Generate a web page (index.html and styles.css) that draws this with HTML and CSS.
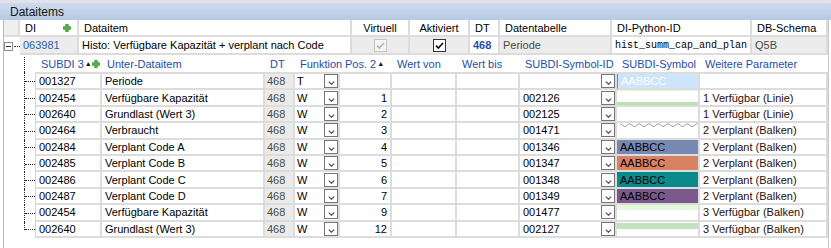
FILE: index.html
```html
<!DOCTYPE html>
<html>
  <head>
    <title>Dataitems</title>
    <link rel="stylesheet" href="styles.css">
  </head>
  <body>
    <div class="panel">
      <div class="caption">Dataitems</div>
      <div class="grid">
        <div class="main-row main-head">
          <div class="cell gutter"></div>
          <div class="cell">DI
            <svg class="plus" width="8" height="8" viewBox="0 0 8 8"><path d="M2.7 0.4h2.6v2.3h2.3v2.6h-2.3v2.3h-2.6v-2.3h-2.3v-2.6h2.3z" fill="#55b545" stroke="#2f8a2a" stroke-width="0.7"/></svg>
          </div>
          <div class="cell">Dataitem</div>
          <div class="cell center">Virtuell</div>
          <div class="cell center">Aktiviert</div>
          <div class="cell">DT</div>
          <div class="cell">Datentabelle</div>
          <div class="cell">DI-Python-ID</div>
          <div class="cell">DB-Schema</div>
        </div>
        <div class="main-row main-item">
          <div class="cell gutter">
            <span class="toggle"><span class="minus"></span></span>
            <span class="dots"></span>
          </div>
          <div class="cell grey link">063981</div>
          <div class="cell">Histo: Verfügbare Kapazität + verplant nach Code</div>
          <div class="cell grey center">
            <span class="check disabled"><svg width="11" height="11" viewBox="0 0 11 11"><path d="M2 5.6l2.4 2.4 4.6-5" fill="none" stroke="#b4b4b4" stroke-width="1.6"/></svg></span>
          </div>
          <div class="cell grey center">
            <span class="check"><svg width="11" height="11" viewBox="0 0 11 11"><path d="M2 5.6l2.4 2.4 4.6-5" fill="none" stroke="#111" stroke-width="1.7"/></svg></span>
          </div>
          <div class="cell dt-link">468</div>
          <div class="cell grey muted">Periode</div>
          <div class="cell mono">hist_summ_cap_and_plan</div>
          <div class="cell grey muted">Q5B</div>
        </div>

        <div class="sub-row sub-head">
          <div class="tree"><span class="stem"></span></div>
          <div class="sub-cells">
            <div class="cell">SUBDI 3<span class="sort">&#9650;</span>
              <svg class="plus sub-plus" width="8" height="8" viewBox="0 0 8 8"><path d="M2.7 0.4h2.6v2.3h2.3v2.6h-2.3v2.3h-2.6v-2.3h-2.3v-2.6h2.3z" fill="#55b545" stroke="#2f8a2a" stroke-width="0.7"/></svg>
            </div>
            <div class="cell">Unter-Dataitem</div>
            <div class="cell">DT</div>
            <div class="cell">Funktion</div>
            <div class="cell">Pos. 2<span class="sort">&#9650;</span></div>
            <div class="cell">Wert von</div>
            <div class="cell">Wert bis</div>
            <div class="cell">SUBDI-Symbol-ID</div>
            <div class="cell">SUBDI-Symbol</div>
            <div class="cell">Weitere Parameter</div>
          </div>
        </div>

        <div class="sub-body">
          <div class="sub-row first">
            <div class="tree"><span class="branch"></span></div>
            <div class="sub-cells">
              <div class="cell">001327</div>
              <div class="cell">Periode</div>
              <div class="cell dt">468</div>
              <div class="cell fn">T<span class="drop"><svg width="7" height="4" viewBox="0 0 7 4"><path d="M0.8 0.6l2.7 2.6 2.7-2.6" fill="none" stroke="#555" stroke-width="1.3"/></svg></span></div>
              <div class="cell num"></div>
              <div class="cell"></div>
              <div class="cell"></div>
              <div class="cell sym-id"><span class="drop"><svg width="7" height="4" viewBox="0 0 7 4"><path d="M0.8 0.6l2.7 2.6 2.7-2.6" fill="none" stroke="#555" stroke-width="1.3"/></svg></span></div>
              <div class="cell sym sym-selected">AABBCC</div>
              <div class="cell param"></div>
            </div>
          </div>
          <div class="sub-row">
            <div class="tree"><span class="branch"></span></div>
            <div class="sub-cells">
              <div class="cell">002454</div>
              <div class="cell">Verfügbare Kapazität</div>
              <div class="cell dt">468</div>
              <div class="cell fn">W<span class="drop"><svg width="7" height="4" viewBox="0 0 7 4"><path d="M0.8 0.6l2.7 2.6 2.7-2.6" fill="none" stroke="#555" stroke-width="1.3"/></svg></span></div>
              <div class="cell num">1</div>
              <div class="cell"></div>
              <div class="cell"></div>
              <div class="cell sym-id">002126<span class="drop"><svg width="7" height="4" viewBox="0 0 7 4"><path d="M0.8 0.6l2.7 2.6 2.7-2.6" fill="none" stroke="#555" stroke-width="1.3"/></svg></span></div>
              <div class="cell sym sym-line"></div>
              <div class="cell param">1 Verfügbar (Linie)</div>
            </div>
          </div>
          <div class="sub-row">
            <div class="tree"><span class="branch"></span></div>
            <div class="sub-cells">
              <div class="cell">002640</div>
              <div class="cell">Grundlast (Wert 3)</div>
              <div class="cell dt">468</div>
              <div class="cell fn">W<span class="drop"><svg width="7" height="4" viewBox="0 0 7 4"><path d="M0.8 0.6l2.7 2.6 2.7-2.6" fill="none" stroke="#555" stroke-width="1.3"/></svg></span></div>
              <div class="cell num">2</div>
              <div class="cell"></div>
              <div class="cell"></div>
              <div class="cell sym-id">002125<span class="drop"><svg width="7" height="4" viewBox="0 0 7 4"><path d="M0.8 0.6l2.7 2.6 2.7-2.6" fill="none" stroke="#555" stroke-width="1.3"/></svg></span></div>
              <div class="cell sym"></div>
              <div class="cell param">1 Verfügbar (Linie)</div>
            </div>
          </div>
          <div class="sub-row">
            <div class="tree"><span class="branch"></span></div>
            <div class="sub-cells">
              <div class="cell">002464</div>
              <div class="cell">Verbraucht</div>
              <div class="cell dt">468</div>
              <div class="cell fn">W<span class="drop"><svg width="7" height="4" viewBox="0 0 7 4"><path d="M0.8 0.6l2.7 2.6 2.7-2.6" fill="none" stroke="#555" stroke-width="1.3"/></svg></span></div>
              <div class="cell num">3</div>
              <div class="cell"></div>
              <div class="cell"></div>
              <div class="cell sym-id">001471<span class="drop"><svg width="7" height="4" viewBox="0 0 7 4"><path d="M0.8 0.6l2.7 2.6 2.7-2.6" fill="none" stroke="#555" stroke-width="1.3"/></svg></span></div>
              <div class="cell sym sym-zigzag">
                <svg width="81" height="5" viewBox="0 0 81 5"><defs><pattern id="zz" width="10" height="5" patternUnits="userSpaceOnUse"><path d="M0 0.5L5 3.8L10 0.5" fill="none" stroke="#9a9a9a" stroke-width="1"/></pattern></defs><rect width="81" height="5" fill="url(#zz)"/></svg>
              </div>
              <div class="cell param">2 Verplant (Balken)</div>
            </div>
          </div>
          <div class="sub-row">
            <div class="tree"><span class="branch"></span></div>
            <div class="sub-cells">
              <div class="cell">002484</div>
              <div class="cell">Verplant Code A</div>
              <div class="cell dt">468</div>
              <div class="cell fn">W<span class="drop"><svg width="7" height="4" viewBox="0 0 7 4"><path d="M0.8 0.6l2.7 2.6 2.7-2.6" fill="none" stroke="#555" stroke-width="1.3"/></svg></span></div>
              <div class="cell num">4</div>
              <div class="cell"></div>
              <div class="cell"></div>
              <div class="cell sym-id">001346<span class="drop"><svg width="7" height="4" viewBox="0 0 7 4"><path d="M0.8 0.6l2.7 2.6 2.7-2.6" fill="none" stroke="#555" stroke-width="1.3"/></svg></span></div>
              <div class="cell sym sym-slate">AABBCC</div>
              <div class="cell param">2 Verplant (Balken)</div>
            </div>
          </div>
          <div class="sub-row">
            <div class="tree"><span class="branch"></span></div>
            <div class="sub-cells">
              <div class="cell">002485</div>
              <div class="cell">Verplant Code B</div>
              <div class="cell dt">468</div>
              <div class="cell fn">W<span class="drop"><svg width="7" height="4" viewBox="0 0 7 4"><path d="M0.8 0.6l2.7 2.6 2.7-2.6" fill="none" stroke="#555" stroke-width="1.3"/></svg></span></div>
              <div class="cell num">5</div>
              <div class="cell"></div>
              <div class="cell"></div>
              <div class="cell sym-id">001347<span class="drop"><svg width="7" height="4" viewBox="0 0 7 4"><path d="M0.8 0.6l2.7 2.6 2.7-2.6" fill="none" stroke="#555" stroke-width="1.3"/></svg></span></div>
              <div class="cell sym sym-salmon">AABBCC</div>
              <div class="cell param">2 Verplant (Balken)</div>
            </div>
          </div>
          <div class="sub-row">
            <div class="tree"><span class="branch"></span></div>
            <div class="sub-cells">
              <div class="cell">002486</div>
              <div class="cell">Verplant Code C</div>
              <div class="cell dt">468</div>
              <div class="cell fn">W<span class="drop"><svg width="7" height="4" viewBox="0 0 7 4"><path d="M0.8 0.6l2.7 2.6 2.7-2.6" fill="none" stroke="#555" stroke-width="1.3"/></svg></span></div>
              <div class="cell num">6</div>
              <div class="cell"></div>
              <div class="cell"></div>
              <div class="cell sym-id">001348<span class="drop"><svg width="7" height="4" viewBox="0 0 7 4"><path d="M0.8 0.6l2.7 2.6 2.7-2.6" fill="none" stroke="#555" stroke-width="1.3"/></svg></span></div>
              <div class="cell sym sym-teal">AABBCC</div>
              <div class="cell param">2 Verplant (Balken)</div>
            </div>
          </div>
          <div class="sub-row">
            <div class="tree"><span class="branch"></span></div>
            <div class="sub-cells">
              <div class="cell">002487</div>
              <div class="cell">Verplant Code D</div>
              <div class="cell dt">468</div>
              <div class="cell fn">W<span class="drop"><svg width="7" height="4" viewBox="0 0 7 4"><path d="M0.8 0.6l2.7 2.6 2.7-2.6" fill="none" stroke="#555" stroke-width="1.3"/></svg></span></div>
              <div class="cell num">7</div>
              <div class="cell"></div>
              <div class="cell"></div>
              <div class="cell sym-id">001349<span class="drop"><svg width="7" height="4" viewBox="0 0 7 4"><path d="M0.8 0.6l2.7 2.6 2.7-2.6" fill="none" stroke="#555" stroke-width="1.3"/></svg></span></div>
              <div class="cell sym sym-purple">AABBCC</div>
              <div class="cell param">2 Verplant (Balken)</div>
            </div>
          </div>
          <div class="sub-row">
            <div class="tree"><span class="branch"></span></div>
            <div class="sub-cells">
              <div class="cell">002454</div>
              <div class="cell">Verfügbare Kapazität</div>
              <div class="cell dt">468</div>
              <div class="cell fn">W<span class="drop"><svg width="7" height="4" viewBox="0 0 7 4"><path d="M0.8 0.6l2.7 2.6 2.7-2.6" fill="none" stroke="#555" stroke-width="1.3"/></svg></span></div>
              <div class="cell num">9</div>
              <div class="cell"></div>
              <div class="cell"></div>
              <div class="cell sym-id">001477<span class="drop"><svg width="7" height="4" viewBox="0 0 7 4"><path d="M0.8 0.6l2.7 2.6 2.7-2.6" fill="none" stroke="#555" stroke-width="1.3"/></svg></span></div>
              <div class="cell sym sym-band-light"></div>
              <div class="cell param">3 Verfügbar (Balken)</div>
            </div>
          </div>
          <div class="sub-row last">
            <div class="tree"><span class="branch"></span></div>
            <div class="sub-cells">
              <div class="cell">002640</div>
              <div class="cell">Grundlast (Wert 3)</div>
              <div class="cell dt">468</div>
              <div class="cell fn">W<span class="drop"><svg width="7" height="4" viewBox="0 0 7 4"><path d="M0.8 0.6l2.7 2.6 2.7-2.6" fill="none" stroke="#555" stroke-width="1.3"/></svg></span></div>
              <div class="cell num">12</div>
              <div class="cell"></div>
              <div class="cell"></div>
              <div class="cell sym-id">002127<span class="drop"><svg width="7" height="4" viewBox="0 0 7 4"><path d="M0.8 0.6l2.7 2.6 2.7-2.6" fill="none" stroke="#555" stroke-width="1.3"/></svg></span></div>
              <div class="cell sym sym-band-green"></div>
              <div class="cell param">3 Verfügbar (Balken)</div>
            </div>
          </div>
        </div>
      </div>
    </div>
  </body>
</html>
```

FILE: styles.css
```css
* {
  box-sizing: border-box;
}
body {
  margin: 0;
  font-family: "Liberation Sans", Arial, sans-serif;
  font-size: 11px;
  color: #000;
  background-color: #fff;
}
.panel {
  width: 831px;
  height: 248px;
  overflow: hidden;
  border-top: 3px solid #e4e1ea;
}
.caption {
  height: 17px;
  padding-left: 10px;
  font-size: 12px;
  line-height: 18px;
  color: #151515;
  background: linear-gradient(#cddbee, #b6cae4);
}
.grid {
  margin-left: 3px;
  width: 826px;
  height: 228px;
  border-left: 1px solid #b9b9b9;
  border-right: 1px solid #c9c9c9;
}
.cell {
  display: flex;
  align-items: center;
  white-space: nowrap;
  overflow: hidden;
}

/* main rows */
.main-row {
  display: grid;
  grid-template-columns: 16px 59px 273px 58px 60px 30px 112px 140px 76px;
}
.main-row > .cell {
  padding-left: 4px;
  border-right: 2px solid #dcdcdc;
  border-bottom: 2px solid #dcdcdc;
}
.main-head > .cell {
  height: 17px;
  padding-left: 5px;
}
.main-item > .cell {
  height: 18px;
  padding-left: 3px;
}
.main-row > .gutter {
  background-color: #efefef;
}
.main-item > .gutter {
  background-color: #fff;
  border-right: none;
  border-bottom: none;
  padding-left: 0;
}
.center {
  justify-content: center;
}
.main-row > .center {
  padding-left: 0;
}
.grey {
  background-color: #ececec;
}
.link {
  color: #2f5ea6;
}
.muted {
  color: #4a4a4a;
}
.dt-link {
  color: #1f52a8;
  font-weight: bold;
}
.mono {
  font-family: "Liberation Mono", "Courier New", monospace;
  font-size: 10px;
}
.plus {
  margin-left: auto;
  margin-right: 6px;
}
.sub-plus {
  margin-right: 2px;
}

.toggle {
  width: 9px;
  height: 9px;
  border: 1px solid #8a8a8a;
  background-color: #fff;
  display: flex;
  align-items: center;
  justify-content: center;
}
.minus {
  width: 5px;
  border-top: 1px solid #333;
}
.dots {
  flex: 1;
  border-top: 1px dotted #333;
  margin-left: 1px;
}

.check {
  width: 13px;
  height: 13px;
  border: 1px solid #333;
  background-color: #fff;
  display: flex;
  align-items: center;
  justify-content: center;
}
.check.disabled {
  border-color: #c4c4c4;
  background-color: #f5f5f5;
}

/* sub rows */
.sub-row {
  display: flex;
}
.tree {
  width: 31px;
  flex: none;
  padding-left: 20px;
  display: flex;
}
.stem {
  border-left: 1px dotted #222;
  margin-top: 2px;
}
.branch {
  width: 11px;
  border-left: 1px dotted #222;
  display: flex;
  align-items: center;
}
.branch::after {
  content: "";
  width: 10px;
  border-top: 1px dotted #222;
}
.last .branch {
  height: 50%;
  align-self: flex-start;
  align-items: flex-end;
}
.sub-cells {
  display: grid;
  grid-template-columns: 66px 163px 30px 45px 52px 65px 63px 97px 83px 128px;
  border-left: 1px solid #d4d4d4;
}
.sub-head .sub-cells {
  border-left: none;
  margin-left: 1px;
}
.sub-head .cell {
  height: 17px;
  padding-left: 5px;
  color: #1c4ea6;
  overflow: visible;
}
.sort {
  font-size: 7px;
  margin-left: 1px;
  color: #111;
}
.sub-body .cell {
  height: 16.4px;
  padding-left: 3px;
  border-right: 2px solid #dcdcdc;
  border-bottom: 2px solid #dcdcdc;
}
.sub-body .first .sub-cells {
  border-top: 2px solid #dcdcdc;
}
.sub-body .cell.dt {
  padding-left: 2px;
  color: #4c4c4c;
  background-color: #ebebeb;
}
.sub-body .cell.fn {
  padding-left: 2px;
}
.sub-body .cell.num {
  justify-content: flex-end;
  padding-right: 3px;
}
.drop {
  width: 14px;
  height: 14px;
  margin-left: auto;
  flex: none;
  border: 1px solid #767676;
  background-color: #fff;
  display: flex;
  align-items: flex-end;
  justify-content: center;
  padding-bottom: 2px;
}
.sub-body .cell.sym {
  padding-left: 3px;
}
.sub-body .cell.param {
  color: #2a0d0d;
}
.sym-selected {
  color: #fff;
  background-color: #cce5fa;
  border-left: 1px solid #3e9ddd;
}
.sym-line {
  background: linear-gradient(#e0f6d8 0, #e0f6d8 1px, #fff 1px, #fff 12px, #bddfb5 12px);
}
.sym-zigzag {
  align-items: flex-start;
}
.sym-slate {
  background-color: #7788b3;
}
.sym-salmon {
  background-color: #d98163;
}
.sym-teal {
  background-color: #0a8a8a;
}
.sym-purple {
  background-color: #7b5a8b;
}
.sym-band-light {
  background: linear-gradient(#e4f9dc 0, #e4f9dc 5px, #fff 5px);
}
.sym-band-green {
  background: linear-gradient(#fff 0, #fff 1px, #c3e3c0 1px, #c3e3c0 7px, #fff 7px);
}
```
